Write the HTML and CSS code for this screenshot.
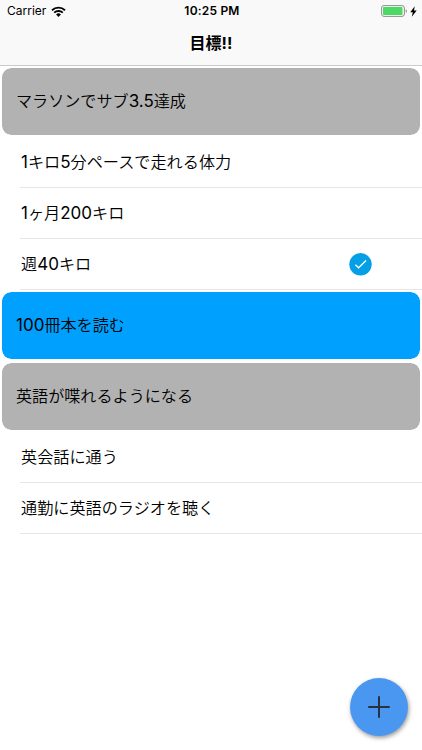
FILE: index.html
```
<!DOCTYPE html>
<html lang="ja">
<head>
  <meta charset="UTF-8">
  <meta name="viewport" content="width=device-width, initial-scale=1.0">
  <title>目標!!</title>
  <link rel="stylesheet" href="styles.css">
</head>
<body>

  <header class="header">
    <div class="status-bar">
      <div class="status-left">
        <span class="carrier">Carrier</span>
        <svg class="wifi" width="15" height="11" viewBox="0 0 15 11">
          <path d="M1 4.2a9.6 9.6 0 0 1 13 0" fill="none" stroke="#000" stroke-width="1.9"/>
          <path d="M3.2 6.7a6.3 6.3 0 0 1 8.6 0" fill="none" stroke="#000" stroke-width="1.8"/>
          <path d="M5.1 8.5a3.5 3.5 0 0 1 4.8 0L7.5 10.9z"/>
        </svg>
      </div>
      <span class="time">10:25 PM</span>
      <div class="status-right">
        <svg width="27" height="12" viewBox="0 0 27 12">
          <rect x=".6" y=".6" width="22.8" height="10.8" rx="2.4" fill="none" stroke="#8f8f8f"/>
          <rect x="2" y="2" width="19.5" height="8" rx=".8" fill="#4cd964"/>
          <path d="M24.7 4.2c1.7.5 1.7 3.1 0 3.6z" fill="#8f8f8f"/>
        </svg>
        <svg width="7" height="11" viewBox="0 0 7 11">
          <path d="M4.7.3.3 6.2h2.5l-1 4.5 4.9-6.1H4z"/>
        </svg>
      </div>
    </div>
    <h1 class="title">目標!!</h1>
  </header>

  <main class="goals">
    <h2 class="goal"><p>マラソンでサブ<span class="num">3.5</span>達成</p></h2>
    <ul class="tasks">
      <li><p><span class="num">1</span>キロ<span class="num">5</span>分ペースで走れる体力</p></li>
      <li><p><span class="num">1</span>ヶ月<span class="num">200</span>キロ</p></li>
      <li>
        <p>週<span class="num">40</span>キロ</p>
        <svg class="check" width="23" height="23" viewBox="0 0 23 23">
          <circle cx="11.5" cy="11.3" r="11.2" fill="#059fe6"/>
          <path d="M6.4 11.7 9.6 14.8 17 7.5" fill="none" stroke="#fff" stroke-width="1.3"/>
        </svg>
      </li>
    </ul>
    <h2 class="goal active"><p><span class="num">100</span>冊本を読む</p></h2>
    <h2 class="goal"><p>英語が喋れるようになる</p></h2>
    <ul class="tasks">
      <li><p>英会話に通う</p></li>
      <li><p>通勤に英語のラジオを聴く</p></li>
    </ul>
  </main>

  <button class="add-button" aria-label="追加">
    <svg width="22" height="22" viewBox="0 0 22 22">
      <path d="M11 1v20M1 11h20" stroke="#26323f" stroke-width="2" stroke-linecap="round"/>
    </svg>
  </button>

</body>
</html>
```
FILE: styles.css
```
* {
  box-sizing: border-box;
}

body {
  margin: 0;
  background-color: #fff;
  color: #000;
  font-family: Inter, "Noto Sans CJK JP", sans-serif;
  overflow: hidden;
}

p {
  margin: 0;
}

.header {
  height: 66px;
  background-color: #f9f9f9;
  border-bottom: 1px solid #cbcbcd;
}

.status-bar {
  display: grid;
  grid-template-columns: 1fr auto 1fr;
  align-items: center;
  height: 22px;
  padding: 0 5px 0 7px;
}

.status-left,
.status-right {
  display: flex;
  align-items: center;
}

.status-left {
  gap: 5px;
}

.status-right {
  justify-content: flex-end;
  gap: 2px;
}

.carrier {
  font-size: 12px;
  line-height: 22px;
}

.time {
  font-size: 12px;
  font-weight: 600;
  line-height: 22px;
  letter-spacing: 0.2px;
}

.title {
  margin: 0;
  font-size: 16px;
  font-weight: 700;
  line-height: 43px;
  text-align: center;
}

.goal {
  display: flex;
  align-items: center;
  height: 71px;
  margin: 0;
  padding: 0 0 3px 14px;
  border: 2px solid #fff;
  border-radius: 11px;
  background-color: #b2b2b2;
  background-clip: padding-box;
  font-size: 16.1px;
  font-weight: 350;
}

.goal.active {
  background-color: #00a0ff;
}

.tasks {
  margin: 0;
  padding: 0 0 0 20px;
  list-style: none;
}

.tasks li {
  display: flex;
  align-items: center;
  justify-content: space-between;
  height: 51px;
  padding: 0 50px 0 1px;
  border-bottom: 1px solid #e6e6e8;
  font-size: 16.15px;
  font-weight: 350;
}

.tasks p {
  padding-bottom: 2px;
}

.num {
  font-size: 17px;
  font-weight: 380;
  line-height: 1;
}

.add-button {
  position: fixed;
  right: 14px;
  bottom: 14px;
  display: flex;
  align-items: center;
  justify-content: center;
  width: 58px;
  height: 58px;
  padding: 0;
  border: none;
  border-radius: 50%;
  background-color: #4a97f1;
  box-shadow: 1px 2px 4px rgba(0, 0, 0, 0.4);
}
```
